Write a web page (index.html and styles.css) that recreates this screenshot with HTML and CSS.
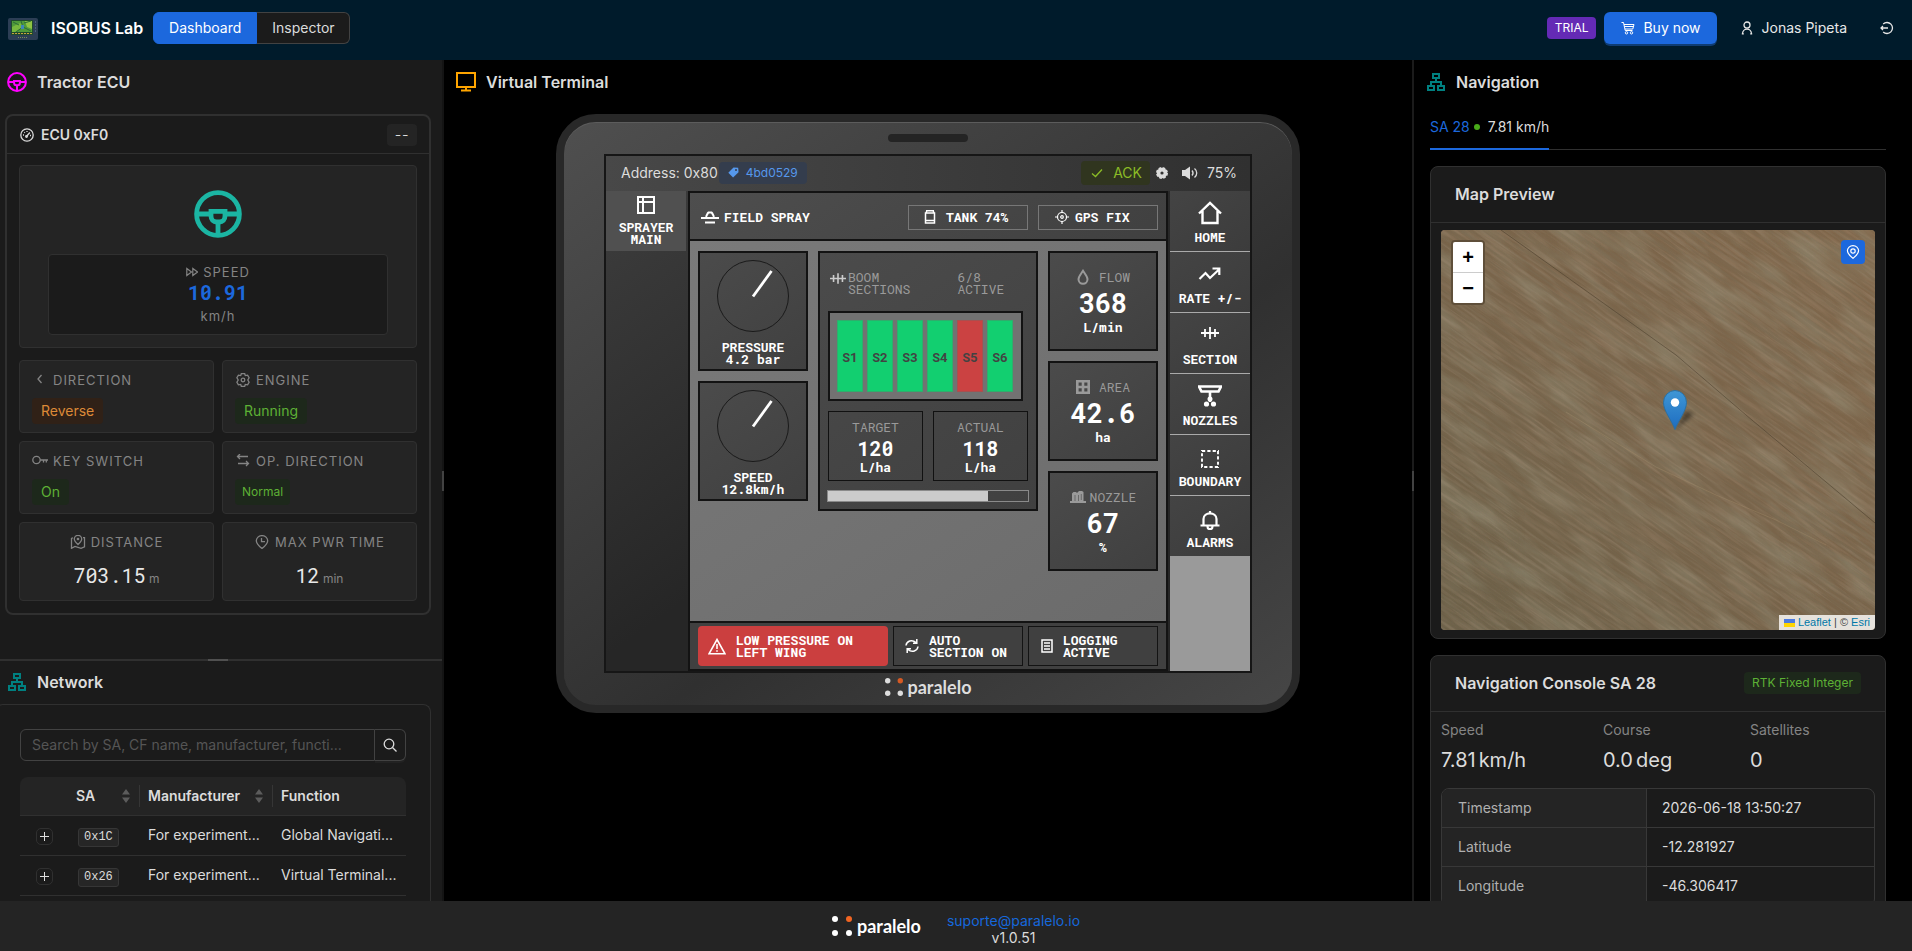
FILE: index.html
```html
<!DOCTYPE html>
<html lang="en">
<head>
<meta charset="utf-8">
<title>ISOBUS Lab</title>
<link rel="stylesheet" href="styles.css">
</head>
<body>
<svg class="defs" aria-hidden="true">
  <symbol id="wheel" viewBox="0 0 24 24"><g fill="none" stroke="currentColor" stroke-width="2.4"><circle cx="12" cy="12" r="10.7"/><path d="M1.500 12h7M15.500 12h7M12 16v7"/><path d="M8.500 10.700h7v2.300c0 1.700-1.200 3-2.800 3h-1.400c-1.600 0-2.800-1.300-2.800-3z"/></g></symbol>
  <symbol id="tree" viewBox="0 0 18 18"><g fill="none" stroke="currentColor" stroke-width="2"><path d="M6 1h6v4H6zM1 13h6v4H1zM11 13h6v4h-6zM9 5v4M4 13V9h10v4"/></g></symbol>
  <symbol id="sort" viewBox="0 0 8 14"><path fill="currentColor" d="M4 0l4 5.500H0zM4 14l4-5.500H0z"/></symbol>
  <symbol id="boom" viewBox="0 0 18 12"><path fill="none" stroke="currentColor" stroke-width="1.800" d="M0 6h18M4 2v8M9 0v12M14 2v8"/></symbol>
</svg>

<header class="topbar">
  <svg class="app-logo" viewBox="0 0 30 22"><rect width="30" height="22" rx="2" fill="#2c3e55"/><rect x="3" y="2" width="22" height="15" fill="#1f4a2c"/><path d="M4 3h20v11H4z" fill="#4f9a3a"/><path d="M4 9l8-4 4 3-9 6H4z" fill="#77b83e"/><path d="M17 3h7v8l-5-2z" fill="#8fc443"/><path d="M13 3l2 6-7 5M15 9l8 4M5 4l6 3M16 5l7-2" stroke="#2b6b35" fill="none"/><path d="M13 7h3v4h-3z" fill="#3e86b8"/><path d="M4 15.500h20" stroke="#c8a23c" stroke-dasharray="2 1"/><path d="M10 19.500h9" stroke="#7b8c58" stroke-dasharray="1 1"/><path d="M27.500 3v12" stroke="#48607c" stroke-dasharray="2 1"/></svg>
  <strong class="brand">ISOBUS Lab</strong>
  <nav class="switch"><button class="switch-btn active">Dashboard</button><button class="switch-btn">Inspector</button></nav>
  <div class="account">
    <span class="trial">TRIAL</span>
    <button class="buy"><svg width="14" height="14" viewBox="0 0 14 14" fill="none" stroke="currentColor"><path d="M.5 1.500h2l1.700 8h7.300M3 3.500h10l-1.200 4.500H4M3.300 5.500h9"/><circle cx="5.500" cy="11.800" r="1.200"/><circle cx="10.500" cy="11.800" r="1.200"/></svg>Buy now</button>
    <button class="ghost"><svg width="12" height="14" viewBox="0 0 12 14" fill="none" stroke="currentColor" stroke-width="1.300"><circle cx="6" cy="4" r="3"/><path d="M1.500 13c0-6.500 9-6.500 9 0M.8 12.800h2M9.200 12.800h2"/></svg>Jonas Pipeta</button>
    <button class="ghost" aria-label="Log out"><svg width="14" height="14" viewBox="0 0 14 14" fill="none" stroke="currentColor" stroke-width="1.300"><path d="M3.200 3A5.500 5.500 0 1 1 3.200 11M8 7H1M3 5L1 7l2 2"/></svg></button>
  </div>
</header>

<main class="layout">
  <section class="left">
    <div class="left-top">
      <h2 class="panel-title"><svg class="magenta" width="20" height="20"><use href="#wheel"/></svg>Tractor ECU</h2>
      <article class="ecu">
        <header class="ecu-head"><h3 class="ecu-name"><svg width="14" height="14" viewBox="0 0 14 14" fill="none" stroke="currentColor" stroke-width="1.300"><circle cx="7" cy="7" r="6.200"/><path d="M6.500 8.500l3.300-4"/><circle cx="6.500" cy="8.500" r=".8"/><path d="M3 7h1M4.300 4.300l.6.600M7 3v1M10 7.500h1"/></svg>ECU 0xF0</h3><span class="badge mono">--</span></header>
        <div class="ecu-body">
          <div class="hero">
            <svg class="teal" width="48" height="48"><use href="#wheel"/></svg>
            <div class="speed">
              <span class="label"><svg width="12" height="10" viewBox="0 0 12 10" fill="none" stroke="currentColor" stroke-width="1.200"><path d="M.8 1.500v7L5.500 5zM6.800 1.500v7L11.500 5z"/></svg>SPEED</span>
              <b class="speed-value mono">10.91</b>
              <span class="label">km/h</span>
            </div>
          </div>
          <div class="tiles">
            <div class="tile"><span class="label"><svg width="16" height="14" viewBox="0 0 16 14" fill="none" stroke="currentColor" stroke-width="1.300"><path d="M9.500 2L6 6l3.500 4"/></svg>DIRECTION</span><span class="tag orange">Reverse</span></div>
            <div class="tile"><span class="label"><svg width="16" height="14" viewBox="0 0 16 14" fill="none" stroke="currentColor" stroke-width="1.300"><path d="M6.300.7h3.400l.6 1.900 2.300-.4 1.500 2.600L12.800 7l1.300 2.200-1.500 2.600-2.300-.4-.6 1.900H6.300l-.6-1.900-2.300.4-1.500-2.600L3.200 7 1.900 4.800l1.500-2.600 2.300.4z"/><circle cx="8" cy="7" r="1.800"/></svg>ENGINE</span><span class="tag green">Running</span></div>
            <div class="tile"><span class="label"><svg width="16" height="14" viewBox="0 0 16 14" fill="none" stroke="currentColor" stroke-width="1.300"><circle cx="4.500" cy="6" r="3.700"/><path d="M8.200 6H16M11.500 6v2.500M14.300 6v2.500"/></svg>KEY SWITCH</span><span class="tag green">On</span></div>
            <div class="tile"><span class="label"><svg width="16" height="14" viewBox="0 0 16 14" fill="none" stroke="currentColor" stroke-width="1.300"><path d="M13 2.500H2.500M5 0L2.500 2.500 5 5M3 9.500h10.500M11 7l2.500 2.500L11 12"/></svg>OP. DIRECTION</span><span class="tag green small">Normal</span></div>
            <div class="tile centered"><span class="label"><svg width="16" height="14" viewBox="0 0 16 14" fill="none" stroke="currentColor" stroke-width="1.300"><path d="M8 9.500C5.800 7.500 4.300 6 4.300 4a3.700 3.700 0 0 1 7.400 0c0 2-1.500 3.500-3.700 5.500zM3 2.700L1.500 3.500v9.800L5 11.500l6 1.800 3.500-1.500V2.700H13"/><circle cx="8" cy="4" r=".7"/></svg>DISTANCE</span><span class="reading"><span class="mono big">703.15</span> m</span></div>
            <div class="tile centered"><span class="label"><svg width="16" height="14" viewBox="0 0 16 14" fill="none" stroke="currentColor" stroke-width="1.300"><path d="M8 13.500C4.500 10.800 2.300 8.500 2.300 5.800a5.700 5.200 0 0 1 11.400 0C13.700 8.500 11.500 10.800 8 13.500z"/><path d="M7.500 3v3.700H11"/></svg>MAX PWR TIME</span><span class="reading"><span class="mono big">12</span> min</span></div>
          </div>
        </div>
      </article>
    </div>
    <div class="split-h"><i></i></div>
    <div class="left-bottom">
      <h2 class="panel-title"><svg class="darkteal" width="20" height="18"><use href="#tree"/></svg>Network</h2>
      <div class="net-card">
        <form class="search"><input class="search-input" aria-label="Search" placeholder="Search by SA, CF name, manufacturer, functi..."><button class="search-btn" type="button" aria-label="Search"><svg width="14" height="14" viewBox="0 0 14 14" fill="none" stroke="currentColor" stroke-width="1.300"><circle cx="6" cy="6" r="4.800"/><path d="M9.500 9.500l4 4"/></svg></button></form>
        <table class="net-table">
          <colgroup><col class="c-exp"><col class="c-sa"><col class="c-man"><col></colgroup>
          <thead><tr><th></th><th><span class="sortable">SA<svg width="8" height="14"><use href="#sort"/></svg></span></th><th><span class="sortable">Manufacturer<svg width="8" height="14"><use href="#sort"/></svg></span></th><th>Function</th></tr></thead>
          <tbody>
            <tr><td><button class="expand" aria-label="Expand"></button></td><td><code>0x1C</code></td><td>For experiment...</td><td>Global Navigati...</td></tr>
            <tr><td><button class="expand" aria-label="Expand"></button></td><td><code>0x26</code></td><td>For experiment...</td><td>Virtual Terminal...</td></tr>
          </tbody>
        </table>
      </div>
    </div>
  </section>
  <div class="split-v"><i></i></div>

  <section class="center">
    <h2 class="panel-title"><svg class="amber" width="20" height="20" viewBox="0 0 20 20" fill="none" stroke="currentColor" stroke-width="2"><path d="M1 1h18v14H1zM10 15v3M5 18.500h10"/></svg>Virtual Terminal</h2>
    <div class="device">
      <div class="speaker"></div>
      <div class="screen">
        <div class="status">
          <span>Address: 0x80</span>
          <span class="version"><svg width="11" height="11" viewBox="0 0 11 11"><path fill="currentColor" d="M.3 5.800L5.500.5l4.700.2.300 4.600-5.400 5.300z"/><circle cx="8" cy="3" r="1" fill="#343d4d"/></svg>4bd0529</span>
          <span class="status-right">
            <span class="ack"><svg width="12" height="12" viewBox="0 0 12 12" fill="none" stroke="currentColor" stroke-width="1.300"><path d="M1 6.500L4.500 9.500 11 2.500"/></svg>ACK</span>
            <svg width="12" height="12" viewBox="0 0 12 12"><circle cx="6" cy="6" r="3.400" fill="none" stroke="currentColor" stroke-width="3.600"/><circle cx="6" cy="6" r="4.900" fill="none" stroke="currentColor" stroke-width="2.200" stroke-dasharray="2.500 1.350"/></svg>
            <svg class="vol" width="16" height="14" viewBox="0 0 16 14"><path fill="currentColor" d="M0 4h3l5-3.500v13L3 10H0z"/><path fill="none" stroke="currentColor" stroke-width="1.300" d="M10 4.500c1.300 1.500 1.300 3.500 0 5M12.500 2.500c3 2.500 3 6.500 0 9"/></svg>
            <span>75%</span>
          </span>
        </div>
        <div class="vt">
          <div class="wset"><svg width="18" height="18" viewBox="0 0 18 18" fill="none" stroke="currentColor" stroke-width="2"><path d="M1 1h16v16H1zM6 1v16M1 6h16"/></svg>SPRAYER<br>MAIN</div>
          <div class="mask">
            <div class="mask-head">
              <span class="field"><svg width="18" height="13" viewBox="0 0 18 13" fill="none" stroke="currentColor" stroke-width="2"><path d="M0 7h18M4 11.500h10M5 6c1-2 1.500-4 2.500-4.500h3C11.500 2 12 4 13 6"/></svg>FIELD SPRAY</span>
              <span class="chip"><svg width="12" height="14" viewBox="0 0 12 14" fill="none" stroke="currentColor" stroke-width="1.500"><path d="M2 .8h8M1.500 3h9v10h-9zM1.500 10.500h9M2 3l.8-2M10 3l-.8-2"/></svg>TANK 74%</span>
              <span class="chip gps"><svg width="14" height="14" viewBox="0 0 14 14" fill="none" stroke="currentColor" stroke-width="1.200"><circle cx="7" cy="7" r="4.500"/><circle cx="7" cy="7" r="1.300"/><path d="M7 0v3M7 11v3M0 7h3M11 7h3"/></svg>GPS FIX</span>
            </div>
            <div class="mask-body">
              <div class="col">
                <div class="gauge"><svg width="74" height="74" viewBox="0 0 74 74"><circle cx="37" cy="37" r="35.500" fill="none" stroke="#1a1a1a"/><path d="M37 37.500L55.500 12" stroke="#fff" stroke-width="2.800"/></svg><span>PRESSURE<br>4.2 bar</span></div>
                <div class="gauge"><svg width="74" height="74" viewBox="0 0 74 74"><circle cx="37" cy="37" r="35.500" fill="none" stroke="#1a1a1a"/><path d="M37 37.500L55.500 12" stroke="#fff" stroke-width="2.800"/></svg><span>SPEED<br>12.8km/h</span></div>
              </div>
              <div class="boom">
                <div class="boom-head"><svg width="16" height="11"><use href="#boom"/></svg><span>BOOM<br>SECTIONS</span><span class="active-count">6/8<br>ACTIVE</span></div>
                <div class="sections"><span>S1</span><span>S2</span><span>S3</span><span>S4</span><span class="off">S5</span><span>S6</span></div>
                <div class="rates">
                  <div class="rate"><span class="dim">TARGET</span><b>120</b><span>L/ha</span></div>
                  <div class="rate"><span class="dim">ACTUAL</span><b>118</b><span>L/ha</span></div>
                </div>
                <div class="bar"><i style="width:80%"></i></div>
              </div>
              <div class="col">
                <div class="stat"><span class="dim"><svg width="14" height="16" viewBox="0 0 14 16" fill="none" stroke="currentColor" stroke-width="2"><path d="M7 1.800C5 5 2.500 7.500 2.500 10.300a4.500 4.500 0 0 0 9 0C11.500 7.500 9 5 7 1.800z"/></svg>FLOW</span><b>368</b><span>L/min</span></div>
                <div class="stat"><span class="dim"><svg width="14" height="14" viewBox="0 0 14 14" fill="none" stroke="currentColor" stroke-width="2.600"><path d="M1.300 1.300h11.400v11.400H1.300zM7 1v12M1 7h12"/></svg>AREA</span><b>42.6</b><span>ha</span></div>
                <div class="stat"><span class="dim tight"><svg width="16" height="12" viewBox="0 0 16 12" fill="currentColor"><path d="M0 10h2V2.500L3.500 1H6l1 1 2-2h3l1.500 1V10H16v2H0z"/><path d="M5 4v6M8.500 4v6M11.300 3v6" stroke="#555" stroke-width=".7"/></svg>NOZZLE</span><b>67</b><span>%</span></div>
              </div>
            </div>
            <div class="mask-foot">
              <div class="alarm"><svg width="18" height="17" viewBox="0 0 18 17" fill="none" stroke="currentColor" stroke-width="1.600"><path d="M9 1.500L17 15.800H1zM9 6v5M9 12.300v1.500"/></svg><span>LOW PRESSURE ON<br>LEFT WING</span></div>
              <div class="note"><svg width="14" height="14" viewBox="0 0 14 14" fill="none" stroke="currentColor" stroke-width="1.500"><path d="M1 6.500C1.500 2 7 0 11 3.500M13 7.500C12.500 12 7 14 3 10.500M11.800 0v4.200H8M2.200 14V9.800H6"/></svg><span>AUTO<br>SECTION ON</span></div>
              <div class="note"><svg width="12" height="14" viewBox="0 0 12 14" fill="none" stroke="currentColor" stroke-width="1.500"><path d="M1 1h10v12H1zM3 4h6M3 7h6M3 10h6"/></svg><span>LOGGING<br>ACTIVE</span></div>
            </div>
          </div>
          <div class="softkeys">
            <button class="key"><svg width="24" height="24" viewBox="0 0 24 24" fill="none" stroke="currentColor" stroke-width="2.400"><path d="M1 12.500L12 2l11 10.500M4.500 10v12h15V10"/></svg>HOME</button>
            <button class="key"><svg width="24" height="24" viewBox="0 0 24 24" fill="none" stroke="currentColor" stroke-width="2.200"><path d="M1.500 17l6-6 4.500 5 9-8.500M14.500 6.500h6.800v6.500"/></svg>RATE +/-</button>
            <button class="key"><svg width="24" height="24" viewBox="-3 -4 24 24"><use href="#boom" width="18" height="12"/></svg>SECTION</button>
            <button class="key"><svg width="24" height="24" viewBox="0 0 24 24" fill="none" stroke="currentColor" stroke-width="2.600"><path d="M1 2.500h22l-2.500 5h-17zM12 8v10"/><circle cx="12" cy="15" r="1.200"/><circle cx="8.500" cy="20" r="1.300"/><circle cx="15.500" cy="20" r="1.300"/></svg>NOZZLES</button>
            <button class="key"><svg width="24" height="24" viewBox="0 -2 24 24" fill="none" stroke="currentColor" stroke-width="1.900" stroke-dasharray="3.200 2.130"><path d="M4 4h16v16H4z"/></svg>BOUNDARY</button>
            <button class="key"><svg width="24" height="24" viewBox="0 -3 24 24" fill="none" stroke="currentColor" stroke-width="2.200"><path d="M2.500 16.500h19M5.500 16.500V10c0-7.500 13-7.500 13 0v6.500M9.500 17.500c0 3.500 5 3.500 5 0M12 2v2"/></svg>ALARMS</button>
          </div>
        </div>
      </div>
      <div class="maker"><svg width="18" height="18" viewBox="0 0 20 20" fill="#ddd"><circle cx="3" cy="3" r="3"/><circle cx="17" cy="3" r="3" fill="#d65a24"/><circle cx="3" cy="17" r="3"/><circle cx="17" cy="17" r="3"/></svg>paralelo</div>
    </div>
  </section>
  <div class="split-v dark"><i></i></div>

  <section class="right">
    <h2 class="panel-title"><svg class="darkteal" width="20" height="18"><use href="#tree"/></svg>Navigation</h2>
    <div class="right-body">
      <div class="tabs"><button class="tab"><span class="tab-sa">SA 28</span><i class="dot"></i>7.81 km/h</button></div>
      <article class="card">
        <h3 class="card-head">Map Preview</h3>
        <div class="card-body">
          <div class="map">
            <svg class="terrain" viewBox="0 0 434 400" preserveAspectRatio="xMidYMid slice">
              <defs>
                <linearGradient id="soil" x1="0" y1="1" x2="1" y2="0"><stop offset="0" stop-color="#6c6048"/><stop offset=".5" stop-color="#79644a"/><stop offset="1" stop-color="#80674b"/></linearGradient>
                <filter id="fine" x="0" y="0" width="100%" height="100%"><feTurbulence type="fractalNoise" baseFrequency="0.006 0.4" numOctaves="2" seed="4"/><feColorMatrix values="0 0 0 0 .2  0 0 0 0 .17  0 0 0 0 .11  2 0 0 0 -.8"/></filter>
                <filter id="light" x="0" y="0" width="100%" height="100%"><feTurbulence type="fractalNoise" baseFrequency="0.02 0.35" numOctaves="4" seed="9"/><feColorMatrix values="0 0 0 0 .58  0 0 0 0 .42  0 0 0 0 .31  1.600 0 0 0 -.65"/></filter>
                <filter id="patch" x="0" y="0" width="100%" height="100%"><feTurbulence type="fractalNoise" baseFrequency="0.014 0.05" numOctaves="4" seed="21"/><feColorMatrix values="0 0 0 0 .36  0 0 0 0 .37  0 0 0 0 .27  2 0 0 0 -.8"/></filter>
              </defs>
              <rect width="434" height="400" fill="url(#soil)"/>
              <g transform="rotate(35 217 200)"><rect x="-120" y="-150" width="680" height="700" filter="url(#patch)" opacity=".4"/><rect x="-120" y="-150" width="680" height="700" filter="url(#fine)" opacity=".45"/><rect x="-120" y="-150" width="680" height="700" filter="url(#light)" opacity=".3"/></g>
              <path d="M60 0l175 125 70 60 129 108" fill="none" stroke="#463a28" opacity=".5"/><path d="M125 182l90 55 60 28 60 25 50 25" fill="none" stroke="#a68e6c" opacity=".35"/>
            </svg>
            <div class="zoom"><button aria-label="Zoom in">+</button><button aria-label="Zoom out">−</button></div>
            <button class="locate" aria-label="Center on vehicle"><svg width="14" height="14" viewBox="0 0 14 14" fill="none" stroke="currentColor" stroke-width="1.200"><path d="M7 13.400C3.500 10.600 1.400 8.300 1.400 5.800a5.600 5.200 0 0 1 11.200 0C12.600 8.300 10.500 10.600 7 13.400z"/><circle cx="7" cy="6" r="2.200"/></svg></button>
            <svg class="pin" width="50" height="41" viewBox="0 0 50 41"><defs><linearGradient id="pinfill" x2="0" y2="1"><stop stop-color="#3f97d6"/><stop offset="1" stop-color="#1d6cc0"/></linearGradient><filter id="soft"><feGaussianBlur stdDeviation="2"/></filter></defs><path d="M25 40L36 21l8 3z" opacity=".45" filter="url(#soft)"/><path d="M25 39.500C22 31 13.500 21 13.500 12.500a11.500 12 0 0 1 23 0C36.500 21 28 31 25 39.500z" fill="url(#pinfill)" stroke="#2e6f9e"/><circle cx="25" cy="12.500" r="4.200" fill="#fff"/></svg>
            <div class="credit"><svg width="11" height="8" viewBox="0 0 11 8"><path fill="#4c7be1" d="M0 0h11v4H0z"/><path fill="#ffd500" d="M0 4h11v4H0z"/></svg><a href="#">Leaflet</a> | © <a href="#">Esri</a></div>
          </div>
        </div>
      </article>
      <article class="card">
        <h3 class="card-head">Navigation Console SA 28<span class="fix">RTK Fixed Integer</span></h3>
        <div class="card-body">
          <dl class="stats"><div><dt>Speed</dt><dd><span>7.81</span> <span>km/h</span></dd></div><div><dt>Course</dt><dd><span>0.0</span> <span>deg</span></dd></div><div><dt>Satellites</dt><dd>0</dd></div></dl>
          <div class="desc-frame"><table class="desc"><tbody><tr><th>Timestamp</th><td>2026-06-18 13:50:27</td></tr><tr><th>Latitude</th><td>-12.281927</td></tr><tr><th>Longitude</th><td>-46.306417</td></tr></tbody></table></div>
        </div>
      </article>
    </div>
  </section>
</main>

<footer class="footer">
  <div class="maker light"><svg width="20" height="20" viewBox="0 0 20 20" fill="#fff"><circle cx="3" cy="3" r="3"/><circle cx="17" cy="3" r="3" fill="#f26522"/><circle cx="3" cy="17" r="3"/><circle cx="17" cy="17" r="3"/></svg>paralelo</div>
  <div class="contact"><a href="mailto:suporte@paralelo.io">suporte@paralelo.io</a><span>v1.0.51</span></div>
</footer>
</body>
</html>
```
FILE: styles.css
```css
* { box-sizing: border-box; }
body { margin: 0; height: 100vh; display: flex; flex-direction: column; overflow: hidden; background: #000; color: #dcdcdc; font: 14px/22px Inter, sans-serif; }
button { font: inherit; color: inherit; background: none; border: 0; padding: 0; }
h2, h3, dl, dd { margin: 0; }
svg { flex: none; display: block; }
a { color: #1668dc; text-decoration: none; }
.defs { position: absolute; width: 0; height: 0; }
.mono { font-family: "Roboto Mono", "Noto Sans Mono", "Liberation Mono", monospace; }

.topbar { flex: none; height: 60px; padding: 12px; padding-left: 8px; background: #001b2b; display: flex; align-items: flex-start; }
.app-logo { width: 30px; height: 22px; margin-top: 6px; }
.brand { margin: 0 10px 0 13px; font-size: 16px; line-height: 32px; font-weight: 600; color: #fff; }
.switch { display: flex; }
.switch-btn { height: 32px; padding: 0 14px 0 15px; background: #1b1b1b; border: 1px solid #424242; border-left: 0; border-radius: 0 6px 6px 0; }
.switch-btn.active { padding: 0 15px; background: #1c68dd; color: #fff; border: 1px solid #1c68dd; border-radius: 6px 0 0 6px; }
.account { margin-left: auto; display: flex; align-items: center; height: 32px; color: #e8e8e8; }
.trial { padding: 0 8px; font-size: 12px; border-radius: 4px; background: #642ab5; color: #fff; }
.buy { display: flex; align-items: center; gap: 8px; height: 32px; margin-left: 8px; padding: 0 16px 0 17px; color: #fff; background: #1c68dd; border-radius: 6px; box-shadow: 0 2px 0 #0f3c72; }
.ghost { display: flex; align-items: center; gap: 9px; height: 32px; padding: 0 8px 0 24px; }
.ghost + .ghost { padding: 0 6px 0 25px; }

.layout { flex: 1; min-height: 0; display: flex; overflow: hidden; }
.left { flex: 0 0 442px; display: flex; flex-direction: column; min-height: 0; background: #1b1b1b; }
.left-top { flex: 0 0 599px; padding: 11px 11px 0 5px; }
.panel-title { display: flex; align-items: center; gap: 10px; height: 22px; padding-left: 2px; font-size: 16px; font-weight: 600; }
.magenta { color: #f0f; } .teal { color: #1bb5a3; } .darkteal { color: #008080; } .amber { color: #ffa500; }
.ecu { margin-top: 21px; border: 2px solid #303030; border-radius: 8px; }
.ecu-head { display: flex; align-items: center; justify-content: space-between; height: 38px; padding: 0 12px 0 13px; border-bottom: 1px solid #303030; }
.ecu-name { display: flex; align-items: center; gap: 7px; font-size: 14px; font-weight: 600; }
.badge { padding: 0 8px; font-size: 12px; background: #242424; border-radius: 4px; }
.ecu-body { padding: 11px 12px 12px; display: grid; gap: 12px; }
.hero { display: flex; flex-direction: column; align-items: center; gap: 16px; padding: 24px 28px 12px; border: 1px solid #303030; border-radius: 4px; background: #242424; }
.speed { width: 100%; height: 81px; padding: 6px; display: flex; flex-direction: column; align-items: center; border: 1px solid #303030; border-radius: 4px; background: #1b1b1b; }
.label { display: flex; align-items: center; gap: 5px; font-size: 13px; line-height: 22px; letter-spacing: 1px; color: #848484; white-space: nowrap; }
.speed-value { padding-bottom: 4px; font-size: 20px; line-height: 18px; color: #1c68dd; }
.tiles { display: grid; grid-template-columns: 1fr 1fr; gap: 8px; }
.tile { height: 73px; padding: 8px 12px 0; border: 1px solid #303030; border-radius: 4px; background: #242424; display: flex; flex-direction: column; align-items: flex-start; gap: 7px; }
.tile.centered { height: 79px; align-items: center; gap: 11px; }
.tag { padding: 0 9px; line-height: 26px; border-radius: 4px; }
.tag.small { padding: 0 7px; font-size: 12px; }
.green { color: #5db135; background: #1d281b; }
.orange { color: #dd8a37; background: #302117; }
.reading { font-size: 12px; color: #848484; }
.big { font-size: 20px; color: #e8e8e8; }
.split-h { flex: none; height: 2px; background: #303030; display: flex; justify-content: center; padding-right: 6px; }
.split-h i { width: 20px; background: #505050; }
.left-bottom { flex: 1; min-height: 0; padding: 10px 11px 0 5px; display: flex; flex-direction: column; overflow: hidden; }
.left-bottom .panel-title { flex: none; }
.net-card { flex: 1; min-height: 0; margin: 11px 0 0 -10px; padding: 24px 24px 0; border: 1px solid #303030; border-bottom: 0; border-radius: 8px 8px 0 0; }
.search { display: flex; height: 32px; }
.search-input { flex: 1; min-width: 0; padding: 0 11px; font: inherit; color: inherit; background: transparent; border: 1px solid #424242; border-radius: 6px 0 0 6px; }
.search-input::placeholder { color: #555; opacity: 1; }
.search-btn { width: 31px; display: flex; align-items: center; justify-content: center; border: 1px solid #424242; border-left: 0; border-radius: 0 6px 6px 0; box-shadow: 0 2px 0 #222; }
.net-table { width: 100%; margin-top: 16px; table-layout: fixed; border-collapse: separate; border-spacing: 0; }
.c-exp { width: 48px; } .c-sa { width: 72px; } .c-man { width: 133px; }
.net-table th { height: 39px; padding: 0 8px; background: #242424; border-bottom: 1px solid #303030; text-align: left; font-weight: 600; white-space: nowrap; }
.net-table th:first-child { border-radius: 8px 0 0; } .net-table th:last-child { border-radius: 0 8px 0 0; }
.sortable { display: flex; align-items: center; justify-content: space-between; margin-right: -8px; padding-right: 9px; border-right: 1px solid #363636; }
.sortable svg { color: #5c5c5c; }
.net-table td { height: 40px; padding: 0 8px 1px; border-bottom: 1px solid #303030; white-space: nowrap; }
.expand { display: block; margin: 2px 0 0 8px; width: 17px; height: 17px; border: 1px solid #303030; border-radius: 5px; background: linear-gradient(#ddd, #ddd) center/9px 1px no-repeat, linear-gradient(#ddd, #ddd) center/1px 9px no-repeat; }
code { display: inline-block; margin-left: 2px; padding: 0 5px; font: 12px/17px "Liberation Mono", monospace; background: #262626; border: 1px solid #363636; border-radius: 3px; }

.split-v { flex: none; width: 2px; background: #141414; display: flex; align-items: center; }
.split-v.dark { background: #1b1b1b; }
.split-v i { width: 2px; height: 20px; background: #424242; }

.center { flex: 1; min-width: 0; display: flex; flex-direction: column; padding: 11px 10px 0; }
.device { align-self: center; width: 744px; margin-top: 21px; padding: 12px 40px 5px; border: 8px solid #282828; border-radius: 40px; background: linear-gradient(145deg, #4f4f4f, #303030 60%, #464646); box-shadow: inset 0 1px 0 #5c5c5c; }
.speaker { width: 80px; height: 8px; margin: 0 auto 12px; border-radius: 4px; background: #242424; }
.screen { border: 2px solid #161616; }
.status { height: 35px; padding: 0 13px 2px 15px; display: flex; align-items: center; background: linear-gradient(90deg, #484848, #303030); }
.version { display: flex; align-items: center; gap: 7px; margin-left: 1px; padding: 0 9px; font-size: 12px; color: #5698ec; background: #343d4d; border-radius: 4px; }
.status-right { margin-left: auto; display: flex; align-items: center; gap: 6px; }
.ack { display: flex; align-items: center; gap: 10px; padding: 0 8px 0 10px; line-height: 24px; color: #8bbb26; background: #30351f; border-radius: 4px; }
.vol { margin: 0 3px 0 8px; }
.vt { display: grid; grid-template-columns: 80px 480px 80px; gap: 2px; height: 480px; background: linear-gradient(145deg, #3d3d3d, #262626 50%); font: bold 13px/12px "Roboto Mono", "Noto Sans Mono", "Liberation Mono", monospace; color: #fff; }
.wset { height: 60px; padding-top: 5px; background: #505050; text-align: center; }
.wset svg { margin: 0 auto 7px; }
.mask { display: flex; flex-direction: column; border: 2px solid #131313; background: linear-gradient(145deg, #7b7b7b, #6a6a6a); }
.mask-head { height: 48px; padding: 2px 8px 0 11px; display: flex; align-items: center; gap: 10px; background: linear-gradient(145deg, #4e4e4e, #404040); border-bottom: 2px solid #131313; }
.field { display: flex; align-items: center; gap: 5px; margin-right: auto; }
.chip { width: 120px; height: 25px; display: flex; align-items: center; gap: 10px; padding-left: 15px; border: 1px solid #777; }
.chip.gps { padding-left: 16px; gap: 6px; }
.mask-body { flex: 1; display: flex; align-items: flex-start; gap: 10px; padding: 10px 8px; }
.col { flex: 0 0 110px; display: grid; gap: 10px; }
.gauge, .boom, .stat { border: 2px solid #131313; background: linear-gradient(145deg, #4b4b4b, #404040); }
.gauge { height: 120px; padding-top: 6px; text-align: center; }
.gauge svg { margin: 0 auto 8px; }
.boom { flex: 1; height: 260px; padding: 18px 8px 0; }
.boom-head { display: flex; align-items: flex-start; gap: 2px; height: 40px; padding-left: 2px; font-weight: 400; color: #9a9a9a; }
.boom-head svg { color: #ccc; margin-top: 2px; }
.active-count { margin-left: 45px; }
.sections { width: 195px; height: 90px; display: flex; gap: 4px; padding: 7px; border: 2px solid #131313; background: #727272; }
.sections span { width: 26px; padding-top: 2px; display: flex; align-items: center; justify-content: center; background: #12cf70; border: 1px solid #2fae6c; color: #424242; }
.sections .off { background: #cb4242; border-color: #a85050; }
.rates { display: flex; gap: 10px; margin-top: 10px; }
.rate { width: 95px; height: 70px; padding-top: 8px; display: flex; flex-direction: column; align-items: center; border: 1px solid #111; }
.rate b { font-size: 20px; line-height: 28px; }
.rate span { line-height: 14px; }
.rate b + span { line-height: 11px; }
.dim { display: flex; align-items: center; gap: 9px; font-weight: 400; color: #9a9a9a; }
.dim.tight { gap: 4px; }
.bar { height: 12px; margin: 9px -1px 0; border: 1px solid #8a8a8a; display: flex; }
.bar i { background: #cbcbcb; }
.stat { height: 100px; display: flex; flex-direction: column; align-items: center; padding-top: 16px; }
.stat .dim { height: 16px; }
.stat b { font-size: 27px; line-height: 36px; }
.stat b + span { line-height: 12px; }
.mask-foot { height: 48px; display: grid; grid-template-columns: 190fr 130fr 130fr; gap: 5px; padding: 3px 8px; border-top: 2px solid #131313; background: #404040; }
.alarm, .note { height: 40px; display: flex; align-items: center; gap: 10px; }
.alarm { padding-left: 10px; border-radius: 4px; background: #cb3f3f; }
.note { padding-left: 11px; border: 1px solid #131313; }
.note:last-child { padding-left: 12px; }
.softkeys { background: #9a9a9a; }
.key { width: 100%; height: 61px; padding-top: 10px; display: flex; flex-direction: column; align-items: center; justify-content: flex-start; gap: 6px; background: linear-gradient(145deg, #444, #3c3c3c); border-bottom: 1px solid #aaa; }
.key:last-child { height: 60px; border: 0; }
.maker { display: flex; justify-content: center; align-items: center; gap: 5px; margin-top: 2px; margin-bottom: 1px; font: bold 18px/24px Lato, sans-serif; color: #ddd; }
.maker.light { margin: 0; color: #fff; }

.right { flex: 0 0 498px; min-width: 0; padding: 11px 0 0 10px; overflow: hidden; }
.right-body { padding: 24px 26px 0 6px; }
.tabs { height: 33px; display: flex; border-bottom: 1px solid #303030; }
.tab { display: flex; align-items: center; height: 33px; padding-bottom: 11px; border-bottom: 2px solid #1c68dd; }
.tab-sa { color: #1c68dd; }
.dot { width: 6px; height: 6px; margin: 0 8px 0 4px; border-radius: 3px; background: #49aa19; }
.card { margin-top: 16px; border: 1px solid #303030; border-radius: 8px; background: #1b1b1b; overflow: hidden; }
.card-head { height: 56px; padding: 0 24px 2px; display: flex; align-items: center; justify-content: space-between; border-bottom: 1px solid #303030; font-size: 16px; font-weight: 600; }
.fix { padding: 0 8px; font-size: 12px; font-weight: 400; color: #5db135; background: #1d281b; border-radius: 4px; }
.card-body { padding: 7px 10px 8px; }
.map { position: relative; height: 400px; border-radius: 4px; overflow: hidden; background: #7b654a; }
.terrain { width: 100%; height: 100%; }
.zoom { position: absolute; left: 10px; top: 10px; border: 2px solid #5f4f3a; border-radius: 4px; overflow: hidden; }
.zoom button { display: block; width: 30px; height: 30px; background: #fff; color: #000; font: bold 20px/30px "Liberation Sans", sans-serif; }
.zoom button:first-child { height: 31px; border-bottom: 1px solid #ccc; }
.locate { position: absolute; right: 10px; top: 10px; width: 24px; height: 24px; padding: 5px; border-radius: 4px; background: #1c68dd; color: #fff; }
.pin { position: absolute; left: 54%; top: 160px; margin-left: -25px; }
.credit { position: absolute; right: 0; bottom: 0; height: 15px; padding: 0 5px; display: flex; align-items: center; white-space: pre; font: 11px/15px "Liberation Sans", sans-serif; color: #444; background: #e6e2dc; }
.credit svg { margin-right: 3px; }
.credit a { color: #0078a8; }
.stats { display: grid; grid-template-columns: 162fr 147fr 125fr; }
.stats dt { color: #848484; }
.stats dd { display: flex; gap: 3px; margin-top: 4px; font-size: 20px; line-height: 30px; }
.desc-frame { margin-top: 13px; border: 1px solid #383838; border-radius: 8px; overflow: hidden; }
.desc { width: 100%; border-collapse: separate; border-spacing: 0; text-align: left; }
.desc th { width: 205px; height: 39px; padding: 0 16px; font-weight: 400; color: #b0b0b0; background: #242424; border-right: 1px solid #383838; border-bottom: 1px solid #383838; }
.desc td { padding: 0 15px; border-bottom: 1px solid #383838; }

.footer { flex: none; height: 50px; display: flex; align-items: center; justify-content: center; gap: 26px; background: #242424; }
.contact { display: flex; flex-direction: column; align-items: center; line-height: 17px; padding-top: 6px; }
```
